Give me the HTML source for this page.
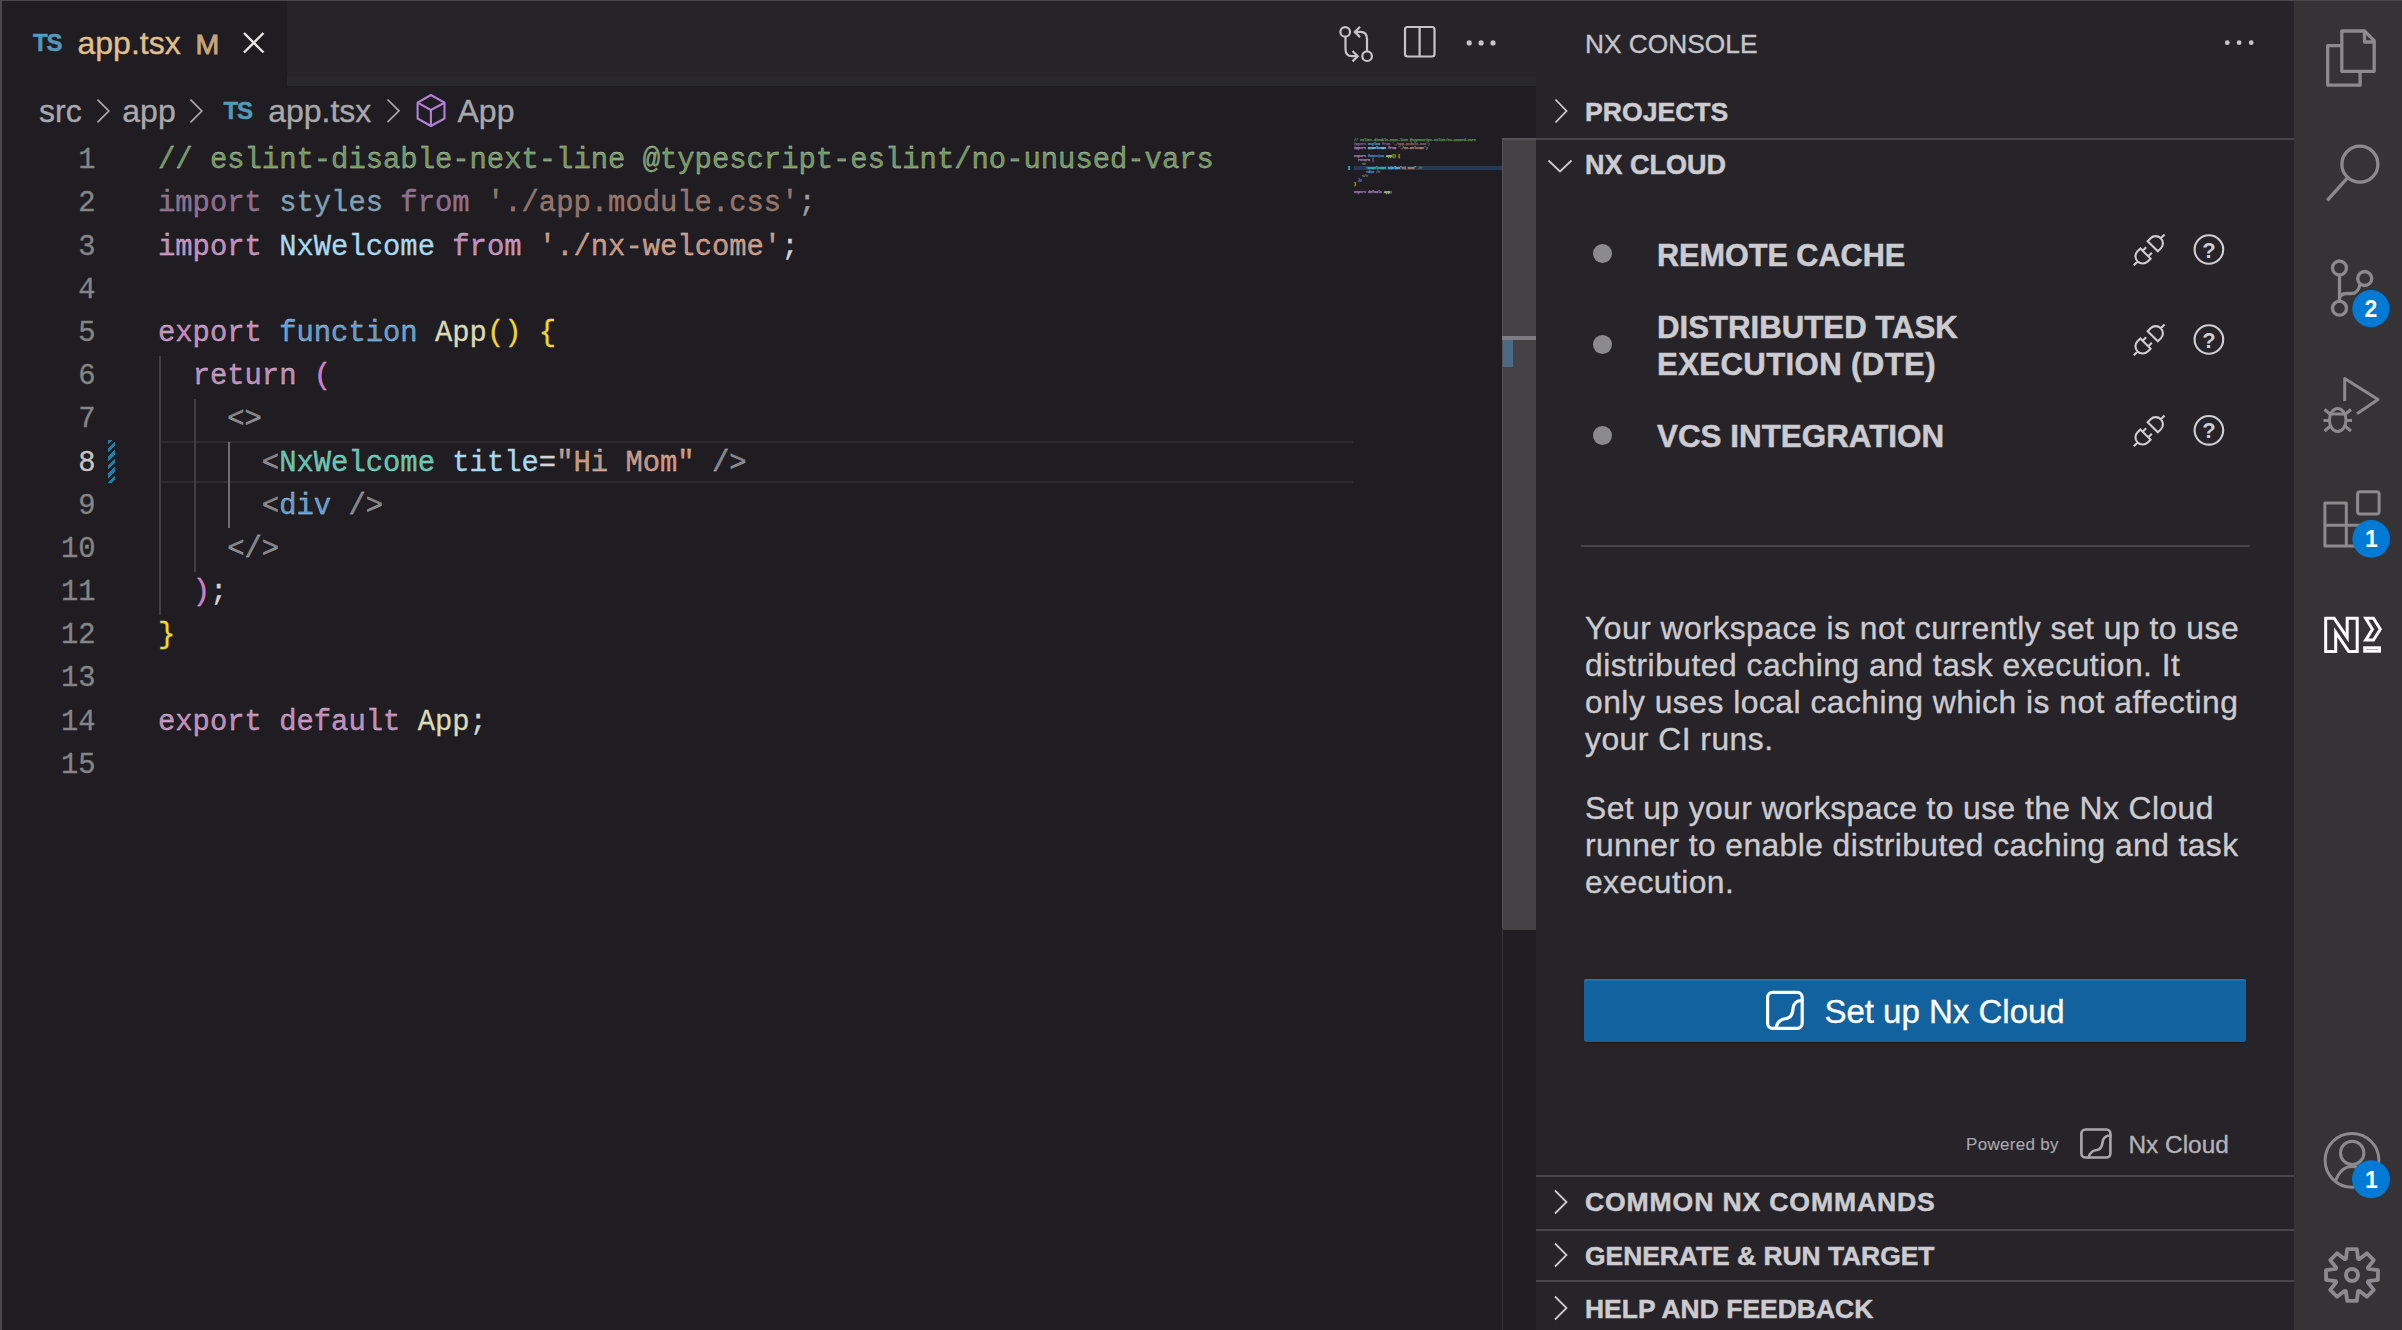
<!DOCTYPE html>
<html><head><meta charset="utf-8"><style>
html,body{margin:0;padding:0;}
body{width:2402px;height:1330px;overflow:hidden;position:relative;background:#1f1d21;}
.t{position:absolute;white-space:pre;}
.r{position:absolute;}
svg{position:absolute;left:0;top:0;}
</style></head><body>
<div class="r" style="left:0px;top:0px;width:2402px;height:1330px;background:#1f1d21;"></div>
<div class="r" style="left:2px;top:1px;width:1534px;height:85px;background:#262429;"></div>
<div class="r" style="left:287px;top:77px;width:1249px;height:9px;background:#29282d;"></div>
<div class="r" style="left:2px;top:1px;width:285px;height:85px;background:#1f1d21;"></div>
<div class="r" style="left:1536px;top:1px;width:758px;height:1329px;background:#262429;"></div>
<div class="r" style="left:2294px;top:1px;width:108px;height:1329px;background:#353336;"></div>
<div class="r" style="left:0px;top:0px;width:2402px;height:1px;background:#48474b;"></div>
<div class="r" style="left:0px;top:0px;width:2px;height:1330px;background:#4a494d;"></div>
<div class="t" style="left:33.00px;top:31.08px;font-size:24px;line-height:24px;color:#519aba;font-weight:700;font-family:'Liberation Sans', sans-serif;letter-spacing:-1.2px;-webkit-text-stroke:0.5px #519aba;">TS</div>
<div class="t" style="left:77.50px;top:27.01px;font-size:32px;line-height:32px;color:#e2c08d;font-weight:400;font-family:'Liberation Sans', sans-serif;-webkit-text-stroke:0.35px #e2c08d;">app.tsx</div>
<div class="t" style="left:195.50px;top:29.87px;font-size:28.5px;line-height:28.5px;color:#c9a57d;font-weight:400;font-family:'Liberation Sans', sans-serif;-webkit-text-stroke:0.9px #c9a57d;">M</div>
<div class="t" style="left:39.00px;top:94.91px;font-size:32px;line-height:32px;color:#a9a8ac;font-weight:400;font-family:'Liberation Sans', sans-serif;-webkit-text-stroke:0.35px #a9a8ac;">src</div>
<div class="t" style="left:122.30px;top:94.91px;font-size:32px;line-height:32px;color:#a9a8ac;font-weight:400;font-family:'Liberation Sans', sans-serif;-webkit-text-stroke:0.35px #a9a8ac;">app</div>
<div class="t" style="left:223.50px;top:99.08px;font-size:24px;line-height:24px;color:#519aba;font-weight:700;font-family:'Liberation Sans', sans-serif;letter-spacing:-1.2px;-webkit-text-stroke:0.5px #519aba;">TS</div>
<div class="t" style="left:268.20px;top:94.91px;font-size:32px;line-height:32px;color:#a9a8ac;font-weight:400;font-family:'Liberation Sans', sans-serif;-webkit-text-stroke:0.35px #a9a8ac;">app.tsx</div>
<div class="t" style="left:457.50px;top:94.91px;font-size:32px;line-height:32px;color:#a9a8ac;font-weight:400;font-family:'Liberation Sans', sans-serif;-webkit-text-stroke:0.35px #a9a8ac;">App</div>
<div class="r" style="left:160px;top:441px;width:1193px;height:2px;background:#2d2c30;"></div>
<div class="r" style="left:160px;top:481px;width:1193px;height:2px;background:#2d2c30;"></div>
<div class="r" style="left:158.5px;top:356px;width:2px;height:259px;background:#3f3e42;"></div>
<div class="r" style="left:193.5px;top:399px;width:2px;height:173px;background:#3f3e42;"></div>
<div class="r" style="left:227.5px;top:442px;width:2px;height:86px;background:#6e6d71;"></div>
<div class="r" style="left:108px;top:440px;width:7px;height:43px;background:repeating-linear-gradient(135deg,#1b81a8 0 3px,transparent 3px 6px);"></div>
<div class="t" style="left:78.19px;top:147.17px;font-size:28.85px;line-height:28.85px;color:#858585;font-weight:400;font-family:'Liberation Mono', monospace;-webkit-text-stroke:0.3px #858585;">1</div>
<div class="t" style="left:158.00px;top:147.17px;font-size:28.85px;line-height:28.85px;color:#d4d4d4;font-weight:400;font-family:'Liberation Mono', monospace;-webkit-text-stroke:0.3px #d4d4d4;"><span style="color:#6a9955">// eslint-disable-next-line @typescript-eslint/no-unused-vars</span></div>
<div class="t" style="left:78.19px;top:190.36px;font-size:28.85px;line-height:28.85px;color:#858585;font-weight:400;font-family:'Liberation Mono', monospace;-webkit-text-stroke:0.3px #858585;">2</div>
<div class="t" style="left:158.00px;top:190.36px;font-size:28.85px;line-height:28.85px;color:#d4d4d4;font-weight:400;font-family:'Liberation Mono', monospace;-webkit-text-stroke:0.3px #d4d4d4;opacity:0.7;"><span style="color:#c586c0">import</span> <span style="color:#9cdcfe">styles</span> <span style="color:#c586c0">from</span> <span style="color:#ce9178">&#x27;./app.module.css&#x27;</span><span style="color:#d4d4d4">;</span></div>
<div class="t" style="left:78.19px;top:233.55px;font-size:28.85px;line-height:28.85px;color:#858585;font-weight:400;font-family:'Liberation Mono', monospace;-webkit-text-stroke:0.3px #858585;">3</div>
<div class="t" style="left:158.00px;top:233.55px;font-size:28.85px;line-height:28.85px;color:#d4d4d4;font-weight:400;font-family:'Liberation Mono', monospace;-webkit-text-stroke:0.3px #d4d4d4;"><span style="color:#c586c0">import</span> <span style="color:#9cdcfe">NxWelcome</span> <span style="color:#c586c0">from</span> <span style="color:#ce9178">&#x27;./nx-welcome&#x27;</span><span style="color:#d4d4d4">;</span></div>
<div class="t" style="left:78.19px;top:276.74px;font-size:28.85px;line-height:28.85px;color:#858585;font-weight:400;font-family:'Liberation Mono', monospace;-webkit-text-stroke:0.3px #858585;">4</div>
<div class="t" style="left:78.19px;top:319.93px;font-size:28.85px;line-height:28.85px;color:#858585;font-weight:400;font-family:'Liberation Mono', monospace;-webkit-text-stroke:0.3px #858585;">5</div>
<div class="t" style="left:158.00px;top:319.93px;font-size:28.85px;line-height:28.85px;color:#d4d4d4;font-weight:400;font-family:'Liberation Mono', monospace;-webkit-text-stroke:0.3px #d4d4d4;"><span style="color:#c586c0">export</span> <span style="color:#569cd6">function</span> <span style="color:#dcdcaa">App</span><span style="color:#ffd700">()</span> <span style="color:#ffd700">{</span></div>
<div class="t" style="left:78.19px;top:363.12px;font-size:28.85px;line-height:28.85px;color:#858585;font-weight:400;font-family:'Liberation Mono', monospace;-webkit-text-stroke:0.3px #858585;">6</div>
<div class="t" style="left:158.00px;top:363.12px;font-size:28.85px;line-height:28.85px;color:#d4d4d4;font-weight:400;font-family:'Liberation Mono', monospace;-webkit-text-stroke:0.3px #d4d4d4;">  <span style="color:#c586c0">return</span> <span style="color:#da70d6">(</span></div>
<div class="t" style="left:78.19px;top:406.31px;font-size:28.85px;line-height:28.85px;color:#858585;font-weight:400;font-family:'Liberation Mono', monospace;-webkit-text-stroke:0.3px #858585;">7</div>
<div class="t" style="left:158.00px;top:406.31px;font-size:28.85px;line-height:28.85px;color:#d4d4d4;font-weight:400;font-family:'Liberation Mono', monospace;-webkit-text-stroke:0.3px #d4d4d4;">    <span style="color:#808080">&lt;&gt;</span></div>
<div class="t" style="left:78.19px;top:449.50px;font-size:28.85px;line-height:28.85px;color:#c6c6c6;font-weight:400;font-family:'Liberation Mono', monospace;-webkit-text-stroke:0.3px #c6c6c6;">8</div>
<div class="t" style="left:158.00px;top:449.50px;font-size:28.85px;line-height:28.85px;color:#d4d4d4;font-weight:400;font-family:'Liberation Mono', monospace;-webkit-text-stroke:0.3px #d4d4d4;">      <span style="color:#808080">&lt;</span><span style="color:#4ec9b0">NxWelcome</span> <span style="color:#9cdcfe">title</span><span style="color:#d4d4d4">=</span><span style="color:#ce9178">&quot;Hi Mom&quot;</span> <span style="color:#808080">/&gt;</span></div>
<div class="t" style="left:78.19px;top:492.69px;font-size:28.85px;line-height:28.85px;color:#858585;font-weight:400;font-family:'Liberation Mono', monospace;-webkit-text-stroke:0.3px #858585;">9</div>
<div class="t" style="left:158.00px;top:492.69px;font-size:28.85px;line-height:28.85px;color:#d4d4d4;font-weight:400;font-family:'Liberation Mono', monospace;-webkit-text-stroke:0.3px #d4d4d4;">      <span style="color:#808080">&lt;</span><span style="color:#569cd6">div</span> <span style="color:#808080">/&gt;</span></div>
<div class="t" style="left:60.88px;top:535.88px;font-size:28.85px;line-height:28.85px;color:#858585;font-weight:400;font-family:'Liberation Mono', monospace;-webkit-text-stroke:0.3px #858585;">10</div>
<div class="t" style="left:158.00px;top:535.88px;font-size:28.85px;line-height:28.85px;color:#d4d4d4;font-weight:400;font-family:'Liberation Mono', monospace;-webkit-text-stroke:0.3px #d4d4d4;">    <span style="color:#808080">&lt;/&gt;</span></div>
<div class="t" style="left:60.88px;top:579.07px;font-size:28.85px;line-height:28.85px;color:#858585;font-weight:400;font-family:'Liberation Mono', monospace;-webkit-text-stroke:0.3px #858585;">11</div>
<div class="t" style="left:158.00px;top:579.07px;font-size:28.85px;line-height:28.85px;color:#d4d4d4;font-weight:400;font-family:'Liberation Mono', monospace;-webkit-text-stroke:0.3px #d4d4d4;">  <span style="color:#da70d6">)</span><span style="color:#d4d4d4">;</span></div>
<div class="t" style="left:60.88px;top:622.26px;font-size:28.85px;line-height:28.85px;color:#858585;font-weight:400;font-family:'Liberation Mono', monospace;-webkit-text-stroke:0.3px #858585;">12</div>
<div class="t" style="left:158.00px;top:622.26px;font-size:28.85px;line-height:28.85px;color:#d4d4d4;font-weight:400;font-family:'Liberation Mono', monospace;-webkit-text-stroke:0.3px #d4d4d4;"><span style="color:#ffd700">}</span></div>
<div class="t" style="left:60.88px;top:665.45px;font-size:28.85px;line-height:28.85px;color:#858585;font-weight:400;font-family:'Liberation Mono', monospace;-webkit-text-stroke:0.3px #858585;">13</div>
<div class="t" style="left:60.88px;top:708.64px;font-size:28.85px;line-height:28.85px;color:#858585;font-weight:400;font-family:'Liberation Mono', monospace;-webkit-text-stroke:0.3px #858585;">14</div>
<div class="t" style="left:158.00px;top:708.64px;font-size:28.85px;line-height:28.85px;color:#d4d4d4;font-weight:400;font-family:'Liberation Mono', monospace;-webkit-text-stroke:0.3px #d4d4d4;"><span style="color:#c586c0">export</span> <span style="color:#c586c0">default</span> <span style="color:#dcdcaa">App</span><span style="color:#d4d4d4">;</span></div>
<div class="t" style="left:60.88px;top:751.83px;font-size:28.85px;line-height:28.85px;color:#858585;font-weight:400;font-family:'Liberation Mono', monospace;-webkit-text-stroke:0.3px #858585;">15</div>
<div class="r" style="left:1354px;top:166px;width:149px;height:4px;background:#264f78;opacity:0.6;"></div>
<div class="r" style="left:1348px;top:166px;width:2px;height:4px;background:#1b9ad6;"></div>
<div class="t" style="left:1354.0px;top:137.60px;font-size:3.333px;line-height:4px;font-family:'Liberation Mono', monospace;font-weight:700;color:#d4d4d4;opacity:0.85;-webkit-text-stroke:0.25px currentColor;"><span style="color:#6a9955">// eslint-disable-next-line @typescript-eslint/no-unused-vars</span></div>
<div class="t" style="left:1354.0px;top:141.62px;font-size:3.333px;line-height:4px;font-family:'Liberation Mono', monospace;font-weight:700;color:#d4d4d4;opacity:0.55;-webkit-text-stroke:0.25px currentColor;"><span style="color:#c586c0">import</span> <span style="color:#9cdcfe">styles</span> <span style="color:#c586c0">from</span> <span style="color:#ce9178">&#x27;./app.module.css&#x27;</span><span style="color:#d4d4d4">;</span></div>
<div class="t" style="left:1354.0px;top:145.64px;font-size:3.333px;line-height:4px;font-family:'Liberation Mono', monospace;font-weight:700;color:#d4d4d4;opacity:0.85;-webkit-text-stroke:0.25px currentColor;"><span style="color:#c586c0">import</span> <span style="color:#9cdcfe">NxWelcome</span> <span style="color:#c586c0">from</span> <span style="color:#ce9178">&#x27;./nx-welcome&#x27;</span><span style="color:#d4d4d4">;</span></div>
<div class="t" style="left:1354.0px;top:153.68px;font-size:3.333px;line-height:4px;font-family:'Liberation Mono', monospace;font-weight:700;color:#d4d4d4;opacity:0.85;-webkit-text-stroke:0.25px currentColor;"><span style="color:#c586c0">export</span> <span style="color:#569cd6">function</span> <span style="color:#dcdcaa">App</span><span style="color:#ffd700">()</span> <span style="color:#ffd700">{</span></div>
<div class="t" style="left:1354.0px;top:157.70px;font-size:3.333px;line-height:4px;font-family:'Liberation Mono', monospace;font-weight:700;color:#d4d4d4;opacity:0.85;-webkit-text-stroke:0.25px currentColor;">  <span style="color:#c586c0">return</span> <span style="color:#da70d6">(</span></div>
<div class="t" style="left:1354.0px;top:161.72px;font-size:3.333px;line-height:4px;font-family:'Liberation Mono', monospace;font-weight:700;color:#d4d4d4;opacity:0.85;-webkit-text-stroke:0.25px currentColor;">    <span style="color:#808080">&lt;&gt;</span></div>
<div class="t" style="left:1354.0px;top:165.74px;font-size:3.333px;line-height:4px;font-family:'Liberation Mono', monospace;font-weight:700;color:#d4d4d4;opacity:0.85;-webkit-text-stroke:0.25px currentColor;">      <span style="color:#808080">&lt;</span><span style="color:#4ec9b0">NxWelcome</span> <span style="color:#9cdcfe">title</span><span style="color:#d4d4d4">=</span><span style="color:#ce9178">&quot;Hi Mom&quot;</span> <span style="color:#808080">/&gt;</span></div>
<div class="t" style="left:1354.0px;top:169.76px;font-size:3.333px;line-height:4px;font-family:'Liberation Mono', monospace;font-weight:700;color:#d4d4d4;opacity:0.85;-webkit-text-stroke:0.25px currentColor;">      <span style="color:#808080">&lt;</span><span style="color:#569cd6">div</span> <span style="color:#808080">/&gt;</span></div>
<div class="t" style="left:1354.0px;top:173.78px;font-size:3.333px;line-height:4px;font-family:'Liberation Mono', monospace;font-weight:700;color:#d4d4d4;opacity:0.85;-webkit-text-stroke:0.25px currentColor;">    <span style="color:#808080">&lt;/&gt;</span></div>
<div class="t" style="left:1354.0px;top:177.80px;font-size:3.333px;line-height:4px;font-family:'Liberation Mono', monospace;font-weight:700;color:#d4d4d4;opacity:0.85;-webkit-text-stroke:0.25px currentColor;">  <span style="color:#da70d6">)</span><span style="color:#d4d4d4">;</span></div>
<div class="t" style="left:1354.0px;top:181.82px;font-size:3.333px;line-height:4px;font-family:'Liberation Mono', monospace;font-weight:700;color:#d4d4d4;opacity:0.85;-webkit-text-stroke:0.25px currentColor;"><span style="color:#ffd700">}</span></div>
<div class="t" style="left:1354.0px;top:189.86px;font-size:3.333px;line-height:4px;font-family:'Liberation Mono', monospace;font-weight:700;color:#d4d4d4;opacity:0.85;-webkit-text-stroke:0.25px currentColor;"><span style="color:#c586c0">export</span> <span style="color:#c586c0">default</span> <span style="color:#dcdcaa">App</span><span style="color:#d4d4d4">;</span></div>
<div class="r" style="left:1502px;top:138px;width:1px;height:1192px;background:#36353a;"></div>
<div class="r" style="left:1503px;top:138px;width:33px;height:792px;background:#444145;"></div>
<div class="r" style="left:1502px;top:138px;width:34px;height:2px;background:#525155;"></div>
<div class="r" style="left:1502px;top:138px;width:1px;height:790px;background:#55545a;"></div>
<div class="r" style="left:1502px;top:336px;width:34px;height:4px;background:#7d7c80;"></div>
<div class="r" style="left:1503px;top:340px;width:10px;height:27px;background:#4b6a85;"></div>
<div class="t" style="left:1585.00px;top:31.33px;font-size:26.3px;line-height:26.3px;color:#c6c5c9;font-weight:400;font-family:'Liberation Sans', sans-serif;-webkit-text-stroke:0.35px #c6c5c9;">NX CONSOLE</div>
<div class="t" style="left:1585.00px;top:98.78px;font-size:26.6px;line-height:26.6px;color:#cccbd0;font-weight:700;font-family:'Liberation Sans', sans-serif;-webkit-text-stroke:0.5px #cccbd0;">PROJECTS</div>
<div class="r" style="left:1536px;top:138px;width:758px;height:2px;background:#48464a;"></div>
<div class="t" style="left:1585.00px;top:152.44px;font-size:27px;line-height:27px;color:#cccbd0;font-weight:700;font-family:'Liberation Sans', sans-serif;-webkit-text-stroke:0.5px #cccbd0;">NX CLOUD</div>
<div class="t" style="left:1657.00px;top:240.09px;font-size:30.6px;line-height:30.6px;color:#cccbd0;font-weight:700;font-family:'Liberation Sans', sans-serif;-webkit-text-stroke:0.5px #cccbd0;">REMOTE CACHE</div>
<div class="t" style="left:1657.00px;top:311.98px;font-size:31.2px;line-height:31.2px;color:#cccbd0;font-weight:700;font-family:'Liberation Sans', sans-serif;-webkit-text-stroke:0.5px #cccbd0;">DISTRIBUTED TASK</div>
<div class="t" style="left:1657.00px;top:348.58px;font-size:31.2px;line-height:31.2px;color:#cccbd0;font-weight:700;font-family:'Liberation Sans', sans-serif;letter-spacing:0.35px;-webkit-text-stroke:0.5px #cccbd0;">EXECUTION (DTE)</div>
<div class="t" style="left:1657.00px;top:420.81px;font-size:31.4px;line-height:31.4px;color:#cccbd0;font-weight:700;font-family:'Liberation Sans', sans-serif;-webkit-text-stroke:0.5px #cccbd0;">VCS INTEGRATION</div>
<div class="r" style="left:1593.2px;top:244.4px;width:18.8px;height:18.8px;border-radius:50%;background:#8a898d"></div>
<div class="r" style="left:1593.2px;top:335.0px;width:18.8px;height:18.8px;border-radius:50%;background:#8a898d"></div>
<div class="r" style="left:1593.2px;top:425.8px;width:18.8px;height:18.8px;border-radius:50%;background:#8a898d"></div>
<div class="r" style="left:1581px;top:545px;width:669px;height:2px;background:#444347;"></div>
<div class="t" style="left:1585.00px;top:613.27px;font-size:31.8px;line-height:31.8px;color:#cccbd0;font-weight:400;font-family:'Liberation Sans', sans-serif;letter-spacing:0.5px;-webkit-text-stroke:0.35px #cccbd0;">Your workspace is not currently set up to use</div>
<div class="t" style="left:1585.00px;top:650.34px;font-size:31.8px;line-height:31.8px;color:#cccbd0;font-weight:400;font-family:'Liberation Sans', sans-serif;letter-spacing:0.5px;-webkit-text-stroke:0.35px #cccbd0;">distributed caching and task execution. It</div>
<div class="t" style="left:1585.00px;top:687.41px;font-size:31.8px;line-height:31.8px;color:#cccbd0;font-weight:400;font-family:'Liberation Sans', sans-serif;letter-spacing:0.5px;-webkit-text-stroke:0.35px #cccbd0;">only uses local caching which is not affecting</div>
<div class="t" style="left:1585.00px;top:724.48px;font-size:31.8px;line-height:31.8px;color:#cccbd0;font-weight:400;font-family:'Liberation Sans', sans-serif;letter-spacing:0.5px;-webkit-text-stroke:0.35px #cccbd0;">your CI runs.</div>
<div class="t" style="left:1585.00px;top:792.87px;font-size:31.8px;line-height:31.8px;color:#cccbd0;font-weight:400;font-family:'Liberation Sans', sans-serif;letter-spacing:0.42px;-webkit-text-stroke:0.35px #cccbd0;">Set up your workspace to use the Nx Cloud</div>
<div class="t" style="left:1585.00px;top:829.77px;font-size:31.8px;line-height:31.8px;color:#cccbd0;font-weight:400;font-family:'Liberation Sans', sans-serif;letter-spacing:0.42px;-webkit-text-stroke:0.35px #cccbd0;">runner to enable distributed caching and task</div>
<div class="t" style="left:1585.00px;top:866.67px;font-size:31.8px;line-height:31.8px;color:#cccbd0;font-weight:400;font-family:'Liberation Sans', sans-serif;letter-spacing:0.42px;-webkit-text-stroke:0.35px #cccbd0;">execution.</div>
<div class="r" style="left:1584px;top:979px;width:662px;height:63px;background:#11629f;border-radius:2px;border-top:2px solid #1a74b4;box-sizing:border-box;box-shadow:0 1px 1px rgba(0,0,0,0.35)"></div>
<div class="t" style="left:1824.40px;top:994.86px;font-size:33px;line-height:33px;color:#ffffff;font-weight:400;font-family:'Liberation Sans', sans-serif;-webkit-text-stroke:0.35px #ffffff;">Set up Nx Cloud</div>
<div class="t" style="left:1966.00px;top:1135.61px;font-size:17px;line-height:17px;color:#a8a7ab;font-weight:400;font-family:'Liberation Sans', sans-serif;letter-spacing:0.3px;-webkit-text-stroke:0.15px #a8a7ab;">Powered by</div>
<div class="t" style="left:2128.50px;top:1132.64px;font-size:24.4px;line-height:24.4px;color:#b4b3b7;font-weight:400;font-family:'Liberation Sans', sans-serif;-webkit-text-stroke:0.35px #b4b3b7;">Nx Cloud</div>
<div class="r" style="left:1536px;top:1175px;width:758px;height:2px;background:#48464a;"></div>
<div class="t" style="left:1585.00px;top:1189.48px;font-size:26.6px;line-height:26.6px;color:#cccbd0;font-weight:700;font-family:'Liberation Sans', sans-serif;letter-spacing:0.85px;-webkit-text-stroke:0.5px #cccbd0;">COMMON NX COMMANDS</div>
<div class="r" style="left:1536px;top:1228.5px;width:758px;height:2px;background:#48464a;"></div>
<div class="t" style="left:1585.00px;top:1242.95px;font-size:26.4px;line-height:26.4px;color:#cccbd0;font-weight:700;font-family:'Liberation Sans', sans-serif;-webkit-text-stroke:0.5px #cccbd0;">GENERATE &amp; RUN TARGET</div>
<div class="r" style="left:1536px;top:1280px;width:758px;height:2px;background:#48464a;"></div>
<div class="t" style="left:1585.00px;top:1296.25px;font-size:26.4px;line-height:26.4px;color:#cccbd0;font-weight:700;font-family:'Liberation Sans', sans-serif;letter-spacing:0.05px;-webkit-text-stroke:0.5px #cccbd0;">HELP AND FEEDBACK</div>
<svg width="2402" height="1330" viewBox="0 0 2402 1330" fill="none">
<!-- tab close -->
<g stroke="#e6e6e6" stroke-width="2.4" stroke-linecap="butt">
<path d="M244 33 L263.5 52.5 M263.5 33 L244 52.5"/>
</g>
<!-- editor actions -->
<g stroke="#c5c5c8" stroke-width="2.2" fill="none">
<circle cx="1345.2" cy="31.9" r="4.8"/>
<circle cx="1367.1" cy="56.2" r="4.8"/>
<path d="M1345.5 36.7 V49 Q1345.5 56.2 1352 56.2 H1357.5 M1352.5 51 L1357.7 56.2 L1352.5 61.4"/>
<path d="M1367 51.4 V39 Q1367 31.9 1360.5 31.9 H1355 M1360 26.7 L1354.8 31.9 L1360 37.1"/>
<rect x="1405" y="27" width="29.5" height="29.5" rx="2.5"/>
<path d="M1419.6 27 V56.5"/>
</g>
<g fill="#c5c5c8">
<circle cx="1469.2" cy="42.9" r="2.6"/><circle cx="1481.1" cy="42.9" r="2.6"/><circle cx="1493" cy="42.9" r="2.6"/>
</g>
<!-- breadcrumb chevrons -->
<g stroke="#a9a8ac" stroke-width="1.7" fill="none">
<path d="M97.5 99.6 L108.8 111 L97.5 122.4"/>
<path d="M190.5 99.6 L201.8 111 L190.5 122.4"/>
<path d="M387.5 99.5 L399 110.8 L387.5 122.2"/>
</g>
<!-- cube -->
<g stroke="#b180d7" stroke-width="2.1" fill="none" stroke-linejoin="round">
<path d="M430.9 95 L444.5 102.7 V118.5 L430.9 126 L417.6 118.5 V102.7 Z"/>
<path d="M417.6 102.7 L430.9 110 L444.5 102.7 M430.9 110 V126"/>
</g>
<!-- sidebar header ellipsis -->
<g fill="#c5c5c8">
<circle cx="2227.3" cy="42.7" r="2.4"/><circle cx="2239.1" cy="42.7" r="2.4"/><circle cx="2251.2" cy="42.7" r="2.4"/>
</g>
<!-- sidebar chevrons -->
<g stroke="#cccbd0" stroke-width="1.8" fill="none">
<path d="M1555.5 99.5 L1566.5 111 L1555.5 122.5"/>
<path d="M1548.5 160.5 L1560 171.5 L1571.5 160.5"/>
<path d="M1555 1190.5 L1566.5 1202 L1555 1213.5"/>
<path d="M1555 1243.5 L1566.5 1255 L1555 1266.5"/>
<path d="M1555 1296.5 L1566.5 1308 L1555 1319.5"/>
</g>


<!-- plug + help icons -->
<g stroke="#cfced2" stroke-width="2.1" fill="none" stroke-linejoin="miter">
<g transform="translate(2149 250) rotate(-45)"><path d="M-21.5 0 H-16.2 M-5 -7.2 H-9 A7.2 7.2 0 0 0 -9 7.2 H-5 Z M-5 -4 H0 M-5 4 H0 M5.3 -7.2 H9.5 A7.2 7.2 0 0 1 9.5 7.2 H5.3 Z M16.7 0 H22"/></g>
<g transform="translate(2149 340) rotate(-45)"><path d="M-21.5 0 H-16.2 M-5 -7.2 H-9 A7.2 7.2 0 0 0 -9 7.2 H-5 Z M-5 -4 H0 M-5 4 H0 M5.3 -7.2 H9.5 A7.2 7.2 0 0 1 9.5 7.2 H5.3 Z M16.7 0 H22"/></g>
<g transform="translate(2149 431) rotate(-45)"><path d="M-21.5 0 H-16.2 M-5 -7.2 H-9 A7.2 7.2 0 0 0 -9 7.2 H-5 Z M-5 -4 H0 M-5 4 H0 M5.3 -7.2 H9.5 A7.2 7.2 0 0 1 9.5 7.2 H5.3 Z M16.7 0 H22"/></g>
<circle cx="2208.9" cy="249.5" r="14.3"/>
<circle cx="2208.9" cy="339.5" r="14.3"/>
<circle cx="2208.9" cy="430.3" r="14.3"/>
</g>
<g fill="#cfced2" font-family="'Liberation Sans', sans-serif" font-weight="700" font-size="22" text-anchor="middle">
<text x="2209" y="257.5">?</text>
<text x="2209" y="347.5">?</text>
<text x="2209" y="438.3">?</text>
</g>
<!-- nx cloud logos -->
<g stroke="#ffffff" stroke-width="3.2" fill="none" stroke-linecap="round">
<rect x="1767.6" y="992.4" width="34.6" height="35.9" rx="5"/>
<path d="M1776 1028 C1777.5 1021 1781 1019 1786 1018.5 C1791 1018 1792.5 1014 1793 1009 C1793.5 1003 1797 1000.5 1802 1000.5"/>
</g>
<g stroke="#a9a8ac" stroke-width="2.6" fill="none" stroke-linecap="round">
<rect x="2081.4" y="1129.5" width="29" height="28" rx="4"/>
<path d="M2088.5 1157.5 C2090 1152 2092.5 1150.5 2097 1150 C2101 1149.5 2102 1146.5 2102.5 1142.5 C2103 1138 2106 1135.5 2110.4 1135.5"/>
</g>
<!-- activity bar -->
<g stroke="#8b8a8e" stroke-width="3.3" fill="none" stroke-linejoin="round">
<path d="M2341.8 31 H2364.5 L2374.2 40.7 V71.3 H2341.8 Z M2364.5 31 V42 H2374.2"/>
<path d="M2341.8 45.7 H2327.7 V85.2 H2360.1 V71.3"/>
<circle cx="2359.9" cy="164.2" r="18"/>
<path d="M2347 178.4 L2327.3 200.4"/>
<circle cx="2339.5" cy="268" r="7"/>
<circle cx="2364.7" cy="278.5" r="7"/>
<circle cx="2339.5" cy="308.2" r="7"/>
<path d="M2339.5 275 V301.2 M2339.5 299 Q2339.5 293.5 2347 293.5 H2352 Q2358 293.5 2360 284.5"/>
</g>
<g stroke="#8b8a8e" stroke-width="3" fill="none" stroke-linejoin="round">
<path d="M2344.7 400.9 V378.5 L2378 399.4 L2357 413.8"/>
<ellipse cx="2337.7" cy="420" rx="8.3" ry="11.6"/>
<path d="M2329.4 414.1 H2346 M2323.5 420.6 H2329.4 M2346 420.6 H2352 M2324.5 409.5 L2330 414 M2351 409.5 L2345.5 414 M2324.5 431 L2330 426.5 M2351 431 L2345.5 426.5"/>
<path d="M2324.9 503 H2346.3 V546 H2324.9 Z M2324.9 525.2 H2364 M2346.3 525.2 V546 H2364 V525.2"/>
<rect x="2357.6" y="491.7" width="21.5" height="22.2" rx="2.5"/>
<circle cx="2352" cy="1160.3" r="26.9"/>
<circle cx="2352.2" cy="1152.9" r="11.7"/>
<path d="M2335.5 1181 C2339 1171.5 2345 1166.5 2352 1166.5 C2359 1166.5 2365 1171.5 2368.5 1181"/>
<path d="M2345.91 1258.70 L2347.19 1249.04 L2356.81 1249.04 L2358.09 1258.70 L2359.22 1259.17 L2366.95 1253.24 L2373.76 1260.05 L2367.83 1267.78 L2368.30 1268.91 L2377.96 1270.19 L2377.96 1279.81 L2368.30 1281.09 L2367.83 1282.22 L2373.76 1289.95 L2366.95 1296.76 L2359.22 1290.83 L2358.09 1291.30 L2356.81 1300.96 L2347.19 1300.96 L2345.91 1291.30 L2344.78 1290.83 L2337.05 1296.76 L2330.24 1289.95 L2336.17 1282.22 L2335.70 1281.09 L2326.04 1279.81 L2326.04 1270.19 L2335.70 1268.91 L2336.17 1267.78 L2330.24 1260.05 L2337.05 1253.24 L2344.78 1259.17 Z" stroke-width="3.8"/>
<circle cx="2352" cy="1275" r="6" stroke-width="4"/>
</g>
<g stroke="#ffffff" stroke-width="3" fill="none" stroke-linejoin="miter">
<path d="M2325.7 618.3 H2334.2 L2347.2 637.5 V618.3 H2357.2 V651.4 H2348.7 L2335.7 632.2 V651.4 H2325.7 Z"/>
<path d="M2365.7 618.3 H2373.5 L2380.3 629.2 L2373.5 640.1 H2365.7 L2372.4 629.2 Z"/>
<rect x="2364.7" y="647.8" width="14.8" height="3.4"/>
</g>
<g fill="#007ad4">
<circle cx="2370.9" cy="308.6" r="18.6"/>
<circle cx="2371.2" cy="538.9" r="18.8"/>
<circle cx="2371" cy="1179.3" r="19"/>
</g>
<g fill="#ffffff" font-family="'Liberation Sans', sans-serif" font-weight="700" font-size="23" text-anchor="middle">
<text x="2371" y="316.8">2</text>
<text x="2371.5" y="547.1">1</text>
<text x="2371.3" y="1187.5">1</text>
</g>
</svg>

</body></html>
